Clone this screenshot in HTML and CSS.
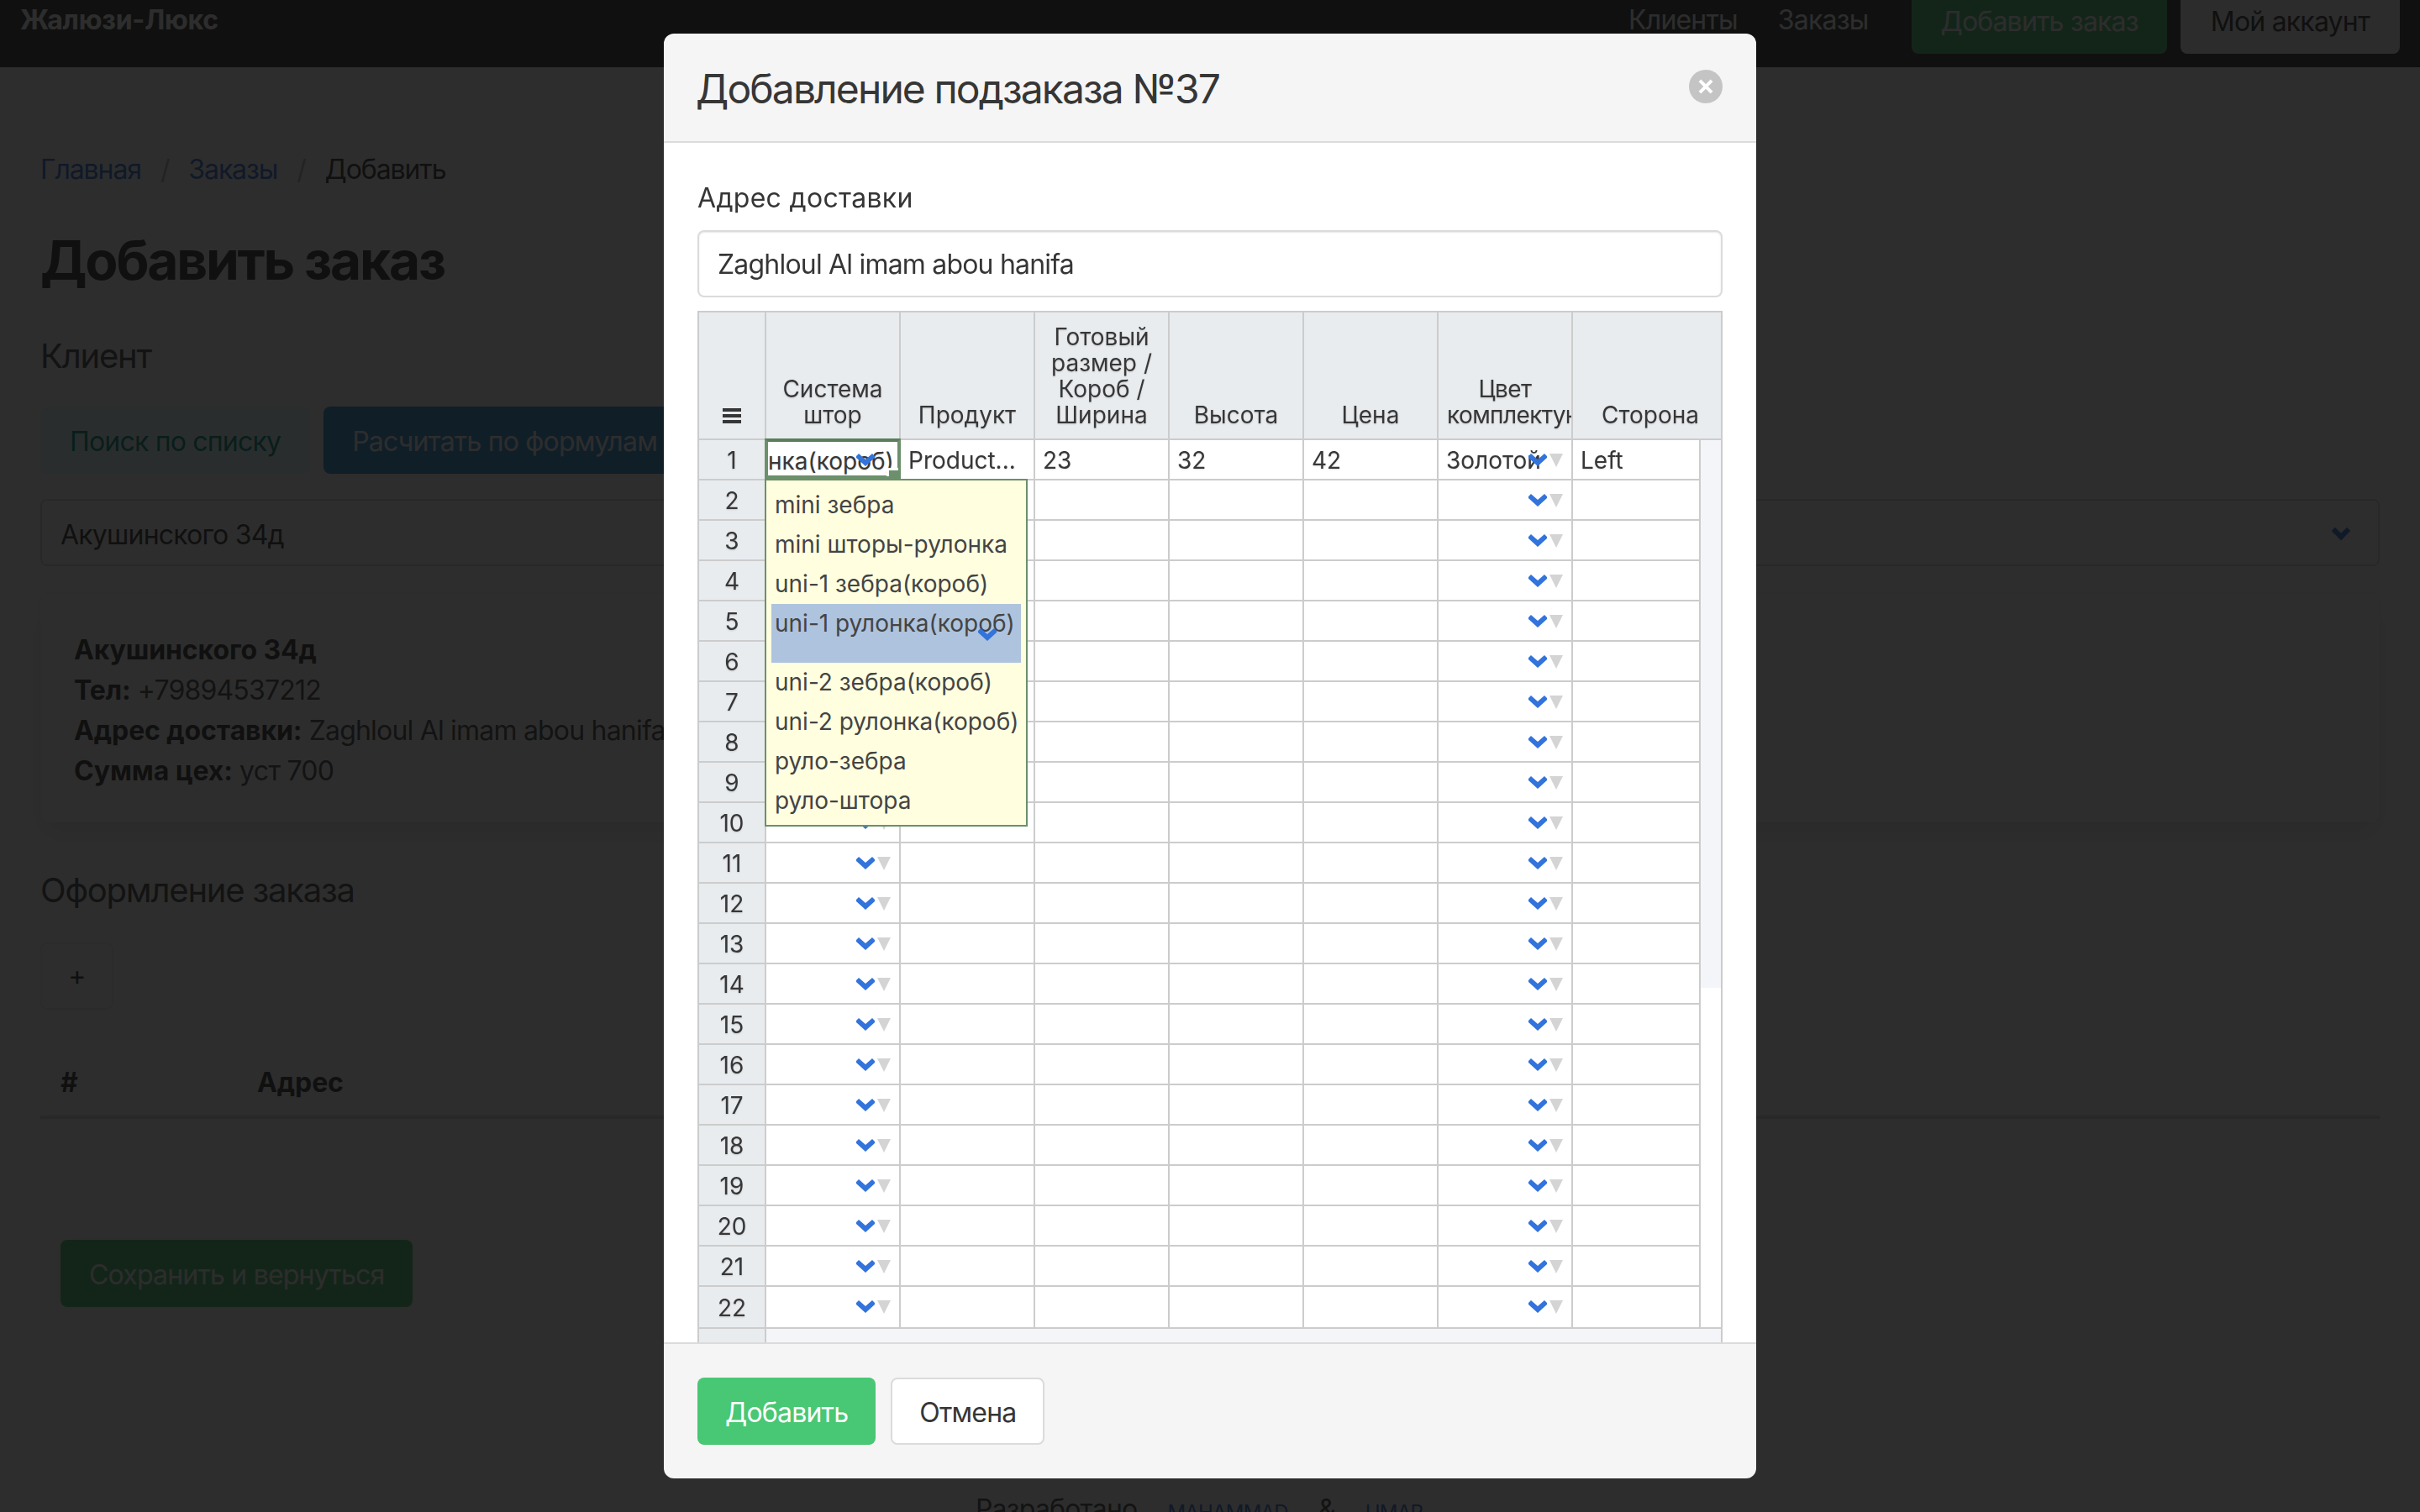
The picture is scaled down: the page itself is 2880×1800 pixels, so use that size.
FILE: index.html
```html
<!DOCTYPE html>
<html lang="ru">
<head>
<meta charset="utf-8">
<title>Добавить заказ</title>
<link rel="stylesheet" href="styles.css">
</head>
<body>
<div class="page">
  <nav class="navbar">
    <a class="brand">Жалюзи-Люкс</a>
    <div class="nav-end">
      <a class="nav-link">Клиенты</a>
      <a class="nav-link">Заказы</a>
      <a class="btn btn-green nav-add">Добавить заказ</a>
      <a class="btn btn-light">Мой аккаунт</a>
    </div>
  </nav>
  <main class="container">
    <ul class="crumbs">
      <li><a>Главная</a></li><li class="sep">/</li><li><a>Заказы</a></li><li class="sep">/</li><li>Добавить</li>
    </ul>
    <h1 class="title">Добавить заказ</h1>
    <h2 class="subtitle sub-client">Клиент</h2>
    <div class="btn-row">
      <a class="btn btn-tint">Поиск по списку</a>
      <a class="btn btn-info">Расчитать по формулам</a>
    </div>
    <div class="select">Акушинского 34д<span class="select-arrow"></span></div>
    <div class="box">
      <div><b>Акушинского 34д</b></div>
      <div><b>Тел:</b> +79894537212</div>
      <div><b>Адрес доставки:</b> Zaghloul Al imam abou hanifa</div>
      <div><b>Сумма цех:</b> уст 700</div>
    </div>
    <h2 class="subtitle sub-order">Оформление заказа</h2>
    <a class="btn btn-plain plus">+</a>
    <div class="order-head"><b class="oh-num">#</b><b>Адрес</b></div>
    <a class="btn btn-green save">Сохранить и вернуться</a>
    <footer class="foot"><span>Разработано</span><a>MAHAMMAD</a><span>&amp;</span><a>UMAR</a></footer>
  </main>
</div>

<div class="modal">
  <div class="modal-bg"></div>
  <div class="card">
    <header class="card-head">
      <p class="card-title">Добавление подзаказа №37</p>
      <button class="delete" aria-label="close"></button>
    </header>
    <section class="card-body">
      <label class="label">Адрес доставки</label>
      <input class="input" value="Zaghloul Al imam abou hanifa">
      <div class="hot">
        <table class="grid">
          <colgroup><col class="c-head"><col class="c-col"><col class="c-col"><col class="c-col"><col class="c-col"><col class="c-col"><col class="c-col"><col class="c-last"><col class="c-track"></colgroup>
          <thead>
            <tr>
              <th class="corner"><span class="burger"></span></th>
              <th>Система штор</th><th>Продукт</th><th>Готовый размер / Короб / Ширина</th><th>Высота</th><th>Цена</th><th class="th-tight">Цвет комплектующих</th><th class="th-side" colspan="2">Сторона</th>
            </tr>
          </thead>
          <tbody>
            <tr><th>1</th><td></td><td>Product...</td><td>23</td><td>32</td><td>42</td><td class="dd">Золотой</td><td>Left</td><td class="track" rowspan="22"></td></tr>
            <tr><th>2</th><td class="dd"></td><td></td><td></td><td></td><td></td><td class="dd"></td><td></td></tr>
            <tr><th>3</th><td class="dd"></td><td></td><td></td><td></td><td></td><td class="dd"></td><td></td></tr>
            <tr><th>4</th><td class="dd"></td><td></td><td></td><td></td><td></td><td class="dd"></td><td></td></tr>
            <tr><th>5</th><td class="dd"></td><td></td><td></td><td></td><td></td><td class="dd"></td><td></td></tr>
            <tr><th>6</th><td class="dd"></td><td></td><td></td><td></td><td></td><td class="dd"></td><td></td></tr>
            <tr><th>7</th><td class="dd"></td><td></td><td></td><td></td><td></td><td class="dd"></td><td></td></tr>
            <tr><th>8</th><td class="dd"></td><td></td><td></td><td></td><td></td><td class="dd"></td><td></td></tr>
            <tr><th>9</th><td class="dd"></td><td></td><td></td><td></td><td></td><td class="dd"></td><td></td></tr>
            <tr><th>10</th><td class="dd"></td><td></td><td></td><td></td><td></td><td class="dd"></td><td></td></tr>
            <tr><th>11</th><td class="dd"></td><td></td><td></td><td></td><td></td><td class="dd"></td><td></td></tr>
            <tr><th>12</th><td class="dd"></td><td></td><td></td><td></td><td></td><td class="dd"></td><td></td></tr>
            <tr><th>13</th><td class="dd"></td><td></td><td></td><td></td><td></td><td class="dd"></td><td></td></tr>
            <tr><th>14</th><td class="dd"></td><td></td><td></td><td></td><td></td><td class="dd"></td><td></td></tr>
            <tr><th>15</th><td class="dd"></td><td></td><td></td><td></td><td></td><td class="dd"></td><td></td></tr>
            <tr><th>16</th><td class="dd"></td><td></td><td></td><td></td><td></td><td class="dd"></td><td></td></tr>
            <tr><th>17</th><td class="dd"></td><td></td><td></td><td></td><td></td><td class="dd"></td><td></td></tr>
            <tr><th>18</th><td class="dd"></td><td></td><td></td><td></td><td></td><td class="dd"></td><td></td></tr>
            <tr><th>19</th><td class="dd"></td><td></td><td></td><td></td><td></td><td class="dd"></td><td></td></tr>
            <tr><th>20</th><td class="dd"></td><td></td><td></td><td></td><td></td><td class="dd"></td><td></td></tr>
            <tr><th>21</th><td class="dd"></td><td></td><td></td><td></td><td></td><td class="dd"></td><td></td></tr>
            <tr class="row-last"><th>22</th><td class="dd"></td><td></td><td></td><td></td><td></td><td class="dd"></td><td></td></tr>
            <tr class="strip"><th></th><td colspan="8"></td></tr>
          </tbody>
        </table>
        <div class="editor">нка(короб)<span class="chev chev-editor"></span><span class="handle"></span></div>
        <ul class="list">
          <li>mini зебра</li>
          <li>mini шторы-рулонка</li>
          <li>uni-1 зебра(короб)</li>
          <li class="hl">uni-1 рулонка(короб)<span class="chev chev-hl"></span></li>
          <li>uni-2 зебра(короб)</li>
          <li>uni-2 рулонка(короб)</li>
          <li>руло-зебра</li>
          <li>руло-штора</li>
        </ul>
      </div>
    </section>
    <footer class="card-foot">
      <button class="btn btn-green btn-add">Добавить</button>
      <button class="btn btn-plain">Отмена</button>
    </footer>
  </div>
</div>
</body>
</html>
```

FILE: styles.css
```css
* { box-sizing: border-box; }
html, body { margin: 0; height: 100%; overflow: hidden; background: #fff; }
body { font-family: Inter, "Noto Sans", "Liberation Sans", sans-serif; font-size: 32px; line-height: 48px; letter-spacing: -0.8px; color: #4a4a4a; }
a { color: inherit; text-decoration: none; }
ul { list-style: none; margin: 0; padding: 0; }
h1, h2, p { margin: 0; }
b { color: #363636; font-weight: 700; letter-spacing: -0.1px; }

.page { margin-top: -32px; }
.navbar { height: 112px; background: #363636; color: #fff; display: flex; align-items: center; justify-content: space-between; padding: 0 24px; }
.brand { font-weight: 700; font-size: 32px; letter-spacing: -0.2px; }
.nav-end { display: flex; align-items: center; }
.nav-link { margin-right: 48px; }
.nav-add { margin: 0 16px 0 4px; }

.btn { display: inline-flex; align-items: center; justify-content: center; height: 80px; padding: 3px 32px 0; font: inherit; letter-spacing: -0.8px; border-radius: 8px; border: 2px solid transparent; white-space: nowrap; }
.btn-green { background: #48c774; color: #fff; }
.btn-light { background: #f5f5f5; color: #363636; padding: 3px 34px 0; }
.btn-tint { background: #ebfffc; color: #00947e; padding: 3px 33px 0; }
.btn-info { background: #3298dc; color: #fff; }
.btn-plain { background: #fff; color: #363636; border-color: #dbdbdb; }
.btn-add { padding: 3px 31px 0; }

.container { padding: 0 48px; }
.crumbs { display: flex; margin-top: 98px; letter-spacing: -1.1px; color: #363636; }
.crumbs a { color: #3273dc; }
.sep { color: #b5b5b5; margin: 0 23px; }
.title { margin-top: 48px; font-size: 64px; line-height: 72px; font-weight: 700; letter-spacing: -2.2px; color: #363636; }
.subtitle { font-size: 40px; line-height: 50px; font-weight: 400; letter-spacing: -1.2px; color: #4a4a4a; }
.sub-client { margin-top: 53px; }
.btn-row { display: flex; gap: 16px; margin-top: 35px; }
.select { position: relative; margin-top: 30px; height: 80px; border: 2px solid #dbdbdb; border-radius: 8px; padding: 17px 22px 0; color: #363636; }
.select-arrow { position: absolute; right: 36px; top: 28px; width: 16px; height: 16px; border-left: 6px solid #3273dc; border-bottom: 6px solid #3273dc; transform: rotate(-45deg); }
.box { margin-top: 33px; padding: 43px 40px 37px; border-radius: 12px; box-shadow: 0 16px 32px -4px rgba(10,10,10,.1), 0 0 0 2px rgba(10,10,10,.02); }
.sub-order { margin-top: 56px; }
.plus { margin-top: 37px; width: 87px; padding: 0; border-color: #f0f0f0; }
.order-head { margin-top: 63px; height: 67px; padding: 0 0 0 24px; border-bottom: 4px solid #dbdbdb; display: flex; }
.oh-num { width: 234px; }
.save { margin: 144px 0 0 24px; }
.foot { display: flex; justify-content: center; gap: 36px; margin-top: 217px; padding-right: 26px; color: #4a4a4a; }
.foot a { color: #3273dc; font-size: 24px; padding-top: 4px; }

.modal { position: fixed; inset: 0; display: flex; align-items: center; justify-content: center; }
.modal-bg { position: absolute; inset: 0; background: rgba(10,10,10,.86); }
.card { position: relative; width: 1300px; height: 1720px; display: flex; flex-direction: column; border-radius: 12px; overflow: hidden; }
.card-head { flex: none; height: 130px; background: #f5f5f5; border-bottom: 2px solid #dbdbdb; display: flex; align-items: center; justify-content: space-between; padding: 0 40px; }
.card-title { font-size: 48px; line-height: 48px; letter-spacing: -1.9px; color: #363636; margin: 4px 0 0 -2px; }
.delete { position: relative; width: 40px; height: 40px; padding: 0; margin-top: -2px; border: 0; border-radius: 50%; background: #c4c4c4; }
.delete::before, .delete::after { content: ""; position: absolute; left: 10px; top: 18px; width: 20px; height: 4px; background: #fff; transform: rotate(45deg); }
.delete::after { transform: rotate(-45deg); }

.card-body { flex: 1; min-height: 0; overflow: hidden; background: #fff; padding: 40px 40px 0; }
.label { display: block; height: 48px; padding-top: 2px; margin-bottom: 16px; letter-spacing: 0.3px; color: #363636; }
.input { display: block; width: 100%; height: 80px; margin-bottom: 16px; padding: 0 22px; border: 2px solid #dbdbdb; border-radius: 8px; font: inherit; letter-spacing: -0.8px; color: #363636; box-shadow: inset 0 1px 2px rgba(10,10,10,.1); outline: 0; }

.hot { position: relative; font-size: 28px; letter-spacing: 0; color: #373737; }
.grid { table-layout: fixed; width: 1220px; border-collapse: separate; border-spacing: 0; border-top: 2px solid #ccc; border-left: 2px solid #ccc; }
.c-head { width: 80px; }
.c-col { width: 160px; }
.c-last { width: 152px; }
.c-track { width: 26px; }
.grid th, .grid td { padding: 0; font-weight: 400; border-right: 2px solid #ccc; border-bottom: 2px solid #ccc; text-shadow: 0 1px 2px rgba(0,0,0,.15); }
.grid thead th { height: 152px; background: #e9ecef; vertical-align: bottom; text-align: center; padding: 0 10px 12px; line-height: 31px; overflow: hidden; }
.grid thead th.th-tight { letter-spacing: -0.6px; }
.grid thead th.th-side { padding-left: 18px; }
.grid thead th.corner { padding: 0; position: relative; }
.burger { position: absolute; left: 28px; bottom: 18px; width: 22px; height: 18px; border-top: 4px solid #363636; border-bottom: 4px solid #363636; }
.burger::before { content: ""; position: absolute; left: 0; right: 0; top: 3px; height: 4px; background: #363636; }
.grid tbody tr { height: 48px; }
.grid tbody th { background: #e9ecef; text-align: center; padding-top: 3px; line-height: 43px; }
.grid tbody td { position: relative; padding: 3px 8px 0 9px; line-height: 43px; background: #fff; white-space: nowrap; overflow: hidden; }
.grid tbody tr.row-last { height: 50px; }
.grid td.track { padding: 0; background: linear-gradient(#f3f5f9 652px, #fff 652px); border-bottom: 2px solid #ccc; }
.grid tr.strip { height: 20px; }
.grid tr.strip th, .grid tr.strip td { padding: 0; border-bottom: 0; }
.grid tr.strip td { background: #f3f5f9; }

.chev { display: block; width: 22px; height: 15px; background: #3273dc; clip-path: polygon(3px 0, 11px 7px, 19px 0, 22px 3px, 22px 5px, 11px 15px, 0 5px, 0 3px); }
.dd::before { content: ""; position: absolute; right: 29px; top: 16px; width: 22px; height: 15px; background: #3273dc; clip-path: polygon(3px 0, 11px 7px, 19px 0, 22px 3px, 22px 5px, 11px 15px, 0 5px, 0 3px); }
.dd::after { content: ""; position: absolute; right: 10px; top: 16px; border-top: 16px solid #d4d4d4; border-left: 8px solid transparent; border-right: 8px solid transparent; }

.editor { position: absolute; left: 80px; top: 152px; width: 162px; height: 48px; padding: 1px 0 0; line-height: 44px; background: #fff; border: 4px solid #6c8f6c; border-top-color: #5a7d5a; white-space: nowrap; overflow: visible; text-shadow: 0 1px 2px rgba(0,0,0,.15); }
.chev-editor { position: absolute; left: 105px; top: 14px; }
.handle { position: absolute; right: -4px; bottom: -4px; width: 14px; height: 10px; background: #6c8f6c; box-shadow: -3px -3px 0 #fff; }
.list { position: absolute; left: 80px; top: 200px; width: 313px; height: 414px; padding: 6px 6px 0; background: #ffffe0; border: 2px solid #6c8f6c; line-height: 47px; color: #444; }
.list li { height: 47px; padding-left: 4px; white-space: nowrap; }
.list li.hl { position: relative; height: 70px; background: #aec3dd; }
.chev-hl { position: absolute; left: 246px; top: 29px; }

.card-foot { flex: none; height: 162px; background: #f5f5f5; border-top: 2px solid #dbdbdb; display: flex; align-items: center; gap: 18px; padding: 0 40px; }
```
